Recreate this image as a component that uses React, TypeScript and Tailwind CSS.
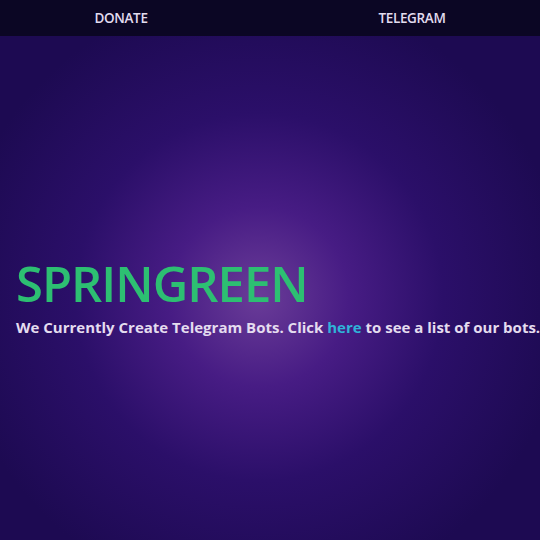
export default function App() {
  return (
    <div className="flex h-[540px] w-[540px] flex-col overflow-hidden bg-[radial-gradient(circle_at_48%_55%,#6a3c98_0%,#471c84_22%,#2b0f69_45%,#1d0a52_75%)] font-['Open_Sans',sans-serif]">
      <nav className="flex h-[36px] shrink-0 items-center justify-around bg-[#0b0624] text-[13.5px] font-semibold tracking-tight text-[#e2dcef]">
        <a className="pr-[40px]">DONATE</a>
        <a className="pl-[2px]">TELEGRAM</a>
      </nav>
      <main className="flex flex-1 flex-col justify-center pl-[16px] pt-[16px]">
        <h1 className="text-[49px] font-semibold leading-[58px] tracking-[-1px] text-[#2dbf72]">SPRINGREEN</h1>
        <p className="mt-[4px] whitespace-nowrap text-[15px] font-bold text-[#e4dcef]">
          We Currently Create Telegram Bots. Click <a className="text-[#2fb3d8]">here</a> to see a list of our bots.
        </p>
      </main>
    </div>
  );
}
